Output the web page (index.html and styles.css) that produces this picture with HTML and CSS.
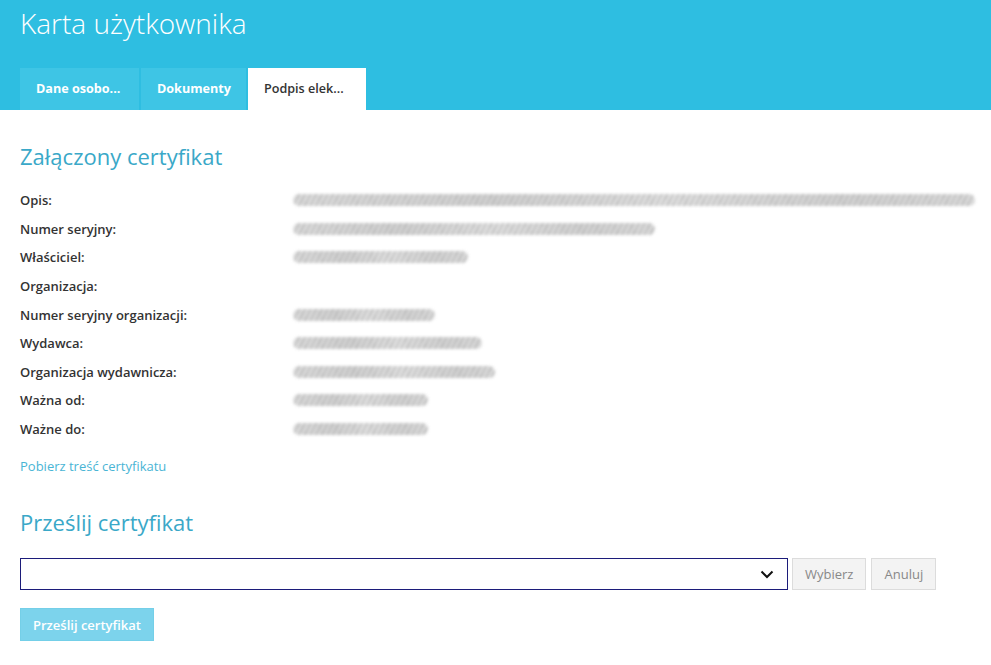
FILE: index.html
```html
<!DOCTYPE html>
<html lang="pl">
<head>
    <meta charset="UTF-8">
    <meta name="viewport" content="width=device-width, initial-scale=1.0">
    <title>Karta użytkownika</title>
    <link rel="stylesheet" href="styles.css">
</head>
<body>
    <div class="header">
        <h1>Karta użytkownika</h1>
        <div class="tabs">
            <div class="tab tab-personal">Dane osobo...</div>
            <div class="tab tab-docs">Dokumenty</div>
            <div class="tab tab-sign active">Podpis elek...</div>
        </div>
    </div>
    <div class="content">
        <h2>Załączony certyfikat</h2>
        <div class="details">
            <div class="label">Opis:</div>
            <div class="value"><span class="blur" style="width: 682px"></span></div>
            <div class="label">Numer seryjny:</div>
            <div class="value"><span class="blur" style="width: 362px"></span></div>
            <div class="label">Właściciel:</div>
            <div class="value"><span class="blur" style="width: 175px"></span></div>
            <div class="label">Organizacja:</div>
            <div class="value"></div>
            <div class="label">Numer seryjny organizacji:</div>
            <div class="value"><span class="blur" style="width: 142px"></span></div>
            <div class="label">Wydawca:</div>
            <div class="value"><span class="blur" style="width: 189px"></span></div>
            <div class="label">Organizacja wydawnicza:</div>
            <div class="value"><span class="blur" style="width: 202px"></span></div>
            <div class="label">Ważna od:</div>
            <div class="value"><span class="blur" style="width: 135px"></span></div>
            <div class="label">Ważne do:</div>
            <div class="value"><span class="blur" style="width: 135px"></span></div>
        </div>
        <a class="link" href="#">Pobierz treść certyfikatu</a>

        <h2 class="upload-title">Prześlij certyfikat</h2>
        <div class="upload-row">
            <div class="select">
                <svg width="14" height="9" viewBox="0 0 14 9"><path d="M1.5 1.5 L7 7 L12.5 1.5" fill="none" stroke="#111" stroke-width="2"/></svg>
            </div>
            <button class="btn-light">Wybierz</button>
            <button class="btn-light">Anuluj</button>
        </div>
        <button class="btn-submit">Prześlij certyfikat</button>
    </div>
</body>
</html>
```

FILE: styles.css
```css
* {
    box-sizing: border-box;
}

body {
    margin: 0;
    font-family: 'Open Sans', 'Liberation Sans', sans-serif;
    font-size: 13px;
    color: #333;
    background: #fff;
}

.header {
    background-color: #2ebee1;
    height: 110px;
    padding: 0 20px;
    display: flex;
    flex-direction: column;
    justify-content: space-between;
}

.header h1 {
    margin: 0;
    padding-top: 4px;
    font-size: 28px;
    font-weight: 300;
    color: #fff;
    line-height: 38px;
}

.tabs {
    display: flex;
    gap: 2px;
}

.tab {
    height: 42px;
    line-height: 42px;
    padding: 0 0 0 16px;
    background-color: #3ec5e5;
    color: #fff;
    font-weight: 700;
    font-size: 12.6px;
    white-space: nowrap;
    overflow: hidden;
}

.tab-personal { width: 119px; }
.tab-docs { width: 105px; }
.tab-sign { width: 118px; }

.tab.active {
    background-color: #fff;
    color: #333;
    font-weight: 600;
}

.content {
    padding: 0 20px;
}

.content h2 {
    margin: 0;
    font-size: 22px;
    font-weight: 400;
    color: #3aa8c8;
    line-height: 30px;
    padding-top: 31px;
    padding-bottom: 15px;
}

.details {
    display: grid;
    grid-template-columns: 273px 1fr;
    grid-auto-rows: 28.6px;
    align-items: center;
}

.label {
    font-weight: 600;
    color: #333;
}

.value {
    display: flex;
    align-items: center;
}

.blur {
    display: block;
    height: 12px;
    border-radius: 6px;
    background:
        repeating-linear-gradient(118deg, rgba(120,120,120,0.55) 0 1.5px, transparent 1.5px 5px),
        linear-gradient(90deg, #d2d2d2, #c4c4c4 30%, #d8d8d8 55%, #c6c6c6 80%, #d0d0d0);
    filter: blur(1.7px);
    opacity: 0.75;
}

.link {
    display: inline-block;
    margin-top: 14px;
    color: #49b5d5;
    text-decoration: none;
}

.content .upload-title {
    padding-top: 32px;
    padding-bottom: 21px;
}

.upload-row {
    display: flex;
    gap: 4px;
    align-items: stretch;
}

.select {
    width: 768px;
    height: 32px;
    border: 1px solid #1c1c7a;
    display: flex;
    align-items: center;
    justify-content: flex-end;
    padding-right: 13px;
}

.btn-light {
    height: 32px;
    padding: 0 12px;
    background: #f3f3f3;
    border: 1px solid #dcdcdc;
    color: #888;
    font-family: inherit;
    font-size: 13px;
}

.btn-light + .btn-light {
    margin-left: 1px;
}

.btn-submit {
    margin-top: 18px;
    height: 33px;
    width: 134px;
    background: #7cd3ec;
    border: 1px solid #74cfe8;
    color: #fff;
    font-family: inherit;
    font-weight: 600;
    font-size: 13px;
}
```
